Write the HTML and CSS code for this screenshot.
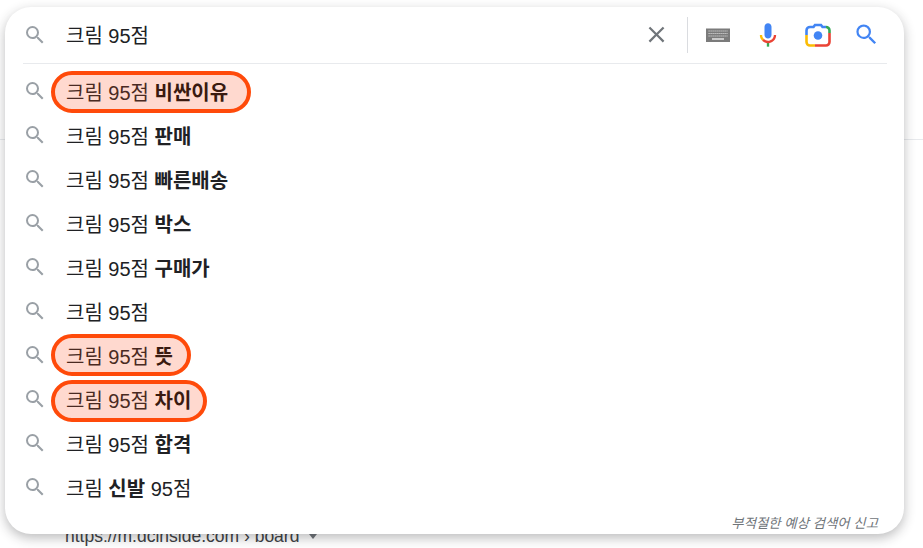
FILE: index.html
```html
<!DOCTYPE html>
<html lang="ko">
<head>
  <meta charset="UTF-8" />
  <title>크림 95점 - 검색</title>
  <link rel="stylesheet" href="styles.css">
</head>
<body>
  <svg class="defs" width="0" height="0">
    <symbol id="mag" viewBox="0 0 24 24">
      <path d="M15.5 14h-.79l-.28-.27A6.471 6.471 0 0 0 16 9.5 6.5 6.5 0 1 0 9.5 16c1.61 0 3.09-.59 4.23-1.57l.27.28v.79l5 4.99L20.49 19l-4.99-5zm-6 0C7.01 14 5 11.99 5 9.5S7.01 5 9.5 5 14 7.01 14 9.5 11.99 14 9.5 14z"/>
    </symbol>
  </svg>

  <!-- page behind the dropdown -->
  <div class="page">
    <div class="page-rule"></div>
    <div class="page-url">https://m.dcinside.com › board <span class="page-caret"></span></div>
  </div>

  <div class="searchbox">
    <div class="query">
      <svg class="mag"><use href="#mag"/></svg>
      <div class="query-text">크림 95점</div>
      <div class="tools">
        <svg class="tool-close" width="24" height="24" viewBox="0 0 24 24">
          <path d="M19 6.41 17.59 5 12 10.59 6.41 5 5 6.41 10.59 12 5 17.59 6.41 19 12 13.41 17.59 19 19 17.59 13.41 12z"/>
        </svg>
        <span class="tool-sep"></span>
        <svg class="tool-kbd" width="26" height="16" viewBox="0 0 26 16">
          <rect x="1" y="1.500" width="24" height="13.500" fill="#7b7b7b"/>
          <path d="M3.500 4h19M3.500 6.500h19M3.500 9h19" stroke="#d8d8d8" stroke-width="1.200" stroke-dasharray="1.200 .8" fill="none"/>
          <path d="M7 12h12" stroke="#e4e4e4" stroke-width="1.500"/>
        </svg>
        <svg class="tool-mic" width="28" height="28" viewBox="0 0 24 24">
          <path fill="#4285f4" d="m12 15c1.660 0 3-1.310 3-2.970v-7.020c0-1.660-1.340-3.010-3-3.010s-3 1.340-3 3.010v7.020c0 1.660 1.340 2.970 3 2.970z"/>
          <path fill="#34a853" d="m11 18.080h2v3.920h-2z"/>
          <path fill="#fbbc05" d="m7.050 16.870c-1.270-1.330-2.050-2.830-2.050-4.870h2c0 1.450 0.560 2.420 1.470 3.380v0.320l-1.150 1.180z"/>
          <path fill="#ea4335" d="m12 16.930a4.970 5.250 0 0 1 -3.540 -1.550l-1.410 1.490c1.260 1.340 3.020 2.130 4.950 2.130 3.870 0 6.990-2.920 6.990-6.990h-1.990c0 2.920-2.240 4.920-5 4.920z"/>
        </svg>
        <svg class="tool-lens" width="28" height="26" viewBox="0 0 28 26">
          <path d="M2.500 13V8.500a3.500 3.500 0 0 1 3.500-3.500h3.500l1.500-2h6l1.500 2H22" fill="none" stroke="#4285f4" stroke-width="2.600"/>
          <path d="M22 5a3.500 3.500 0 0 1 3.500 3.500V11" fill="none" stroke="#34a853" stroke-width="2.600"/>
          <path d="M25.500 11v9a3.500 3.500 0 0 1-3.500 3.500H11" fill="none" stroke="#ea4335" stroke-width="2.600"/>
          <path d="M11 23.500H6A3.500 3.500 0 0 1 2.500 20v-7" fill="none" stroke="#fbbc05" stroke-width="2.600"/>
          <circle cx="14" cy="13.500" r="4.300" fill="#4285f4"/>
        </svg>
        <svg class="tool-search" width="27" height="27" viewBox="0 0 24 24">
          <path d="M15.500 14h-.79l-.28-.27A6.471 6.471 0 0 0 16 9.500 6.500 6.500 0 1 0 9.500 16c1.610 0 3.090-.59 4.230-1.570l.27.28v.79l5 4.990L20.490 19l-4.990-5zm-6 0C7.010 14 5 11.990 5 9.500S7.010 5 9.500 5 14 7.010 14 9.500 11.990 14 9.500 14z"/>
        </svg>
      </div>
    </div>

    <ul class="suggestions">
      <li><svg class="mag"><use href="#mag"/></svg><span class="mark mark-a">크림 95점 <b>비싼이유</b></span></li>
      <li><svg class="mag"><use href="#mag"/></svg><span>크림 95점 <b>판매</b></span></li>
      <li><svg class="mag"><use href="#mag"/></svg><span>크림 95점 <b>빠른배송</b></span></li>
      <li><svg class="mag"><use href="#mag"/></svg><span>크림 95점 <b>박스</b></span></li>
      <li><svg class="mag"><use href="#mag"/></svg><span>크림 95점 <b>구매가</b></span></li>
      <li><svg class="mag"><use href="#mag"/></svg><span>크림 95점</span></li>
      <li><svg class="mag"><use href="#mag"/></svg><span class="mark mark-b">크림 95점 <b>뜻</b></span></li>
      <li><svg class="mag"><use href="#mag"/></svg><span class="mark mark-c">크림 95점 <b>차이</b></span></li>
      <li><svg class="mag"><use href="#mag"/></svg><span>크림 95점 <b>합격</b></span></li>
      <li><svg class="mag"><use href="#mag"/></svg><span>크림 <b>신발</b> 95점</span></li>
    </ul>

    <div class="report">부적절한 예상 검색어 신고</div>
  </div>
</body>
</html>
```

FILE: styles.css
```css
*,
*::before {
  box-sizing: border-box;
}
html,
body {
  height: 100%;
}
body {
  margin: 0;
  background: #fff;
  color: #202124;
  font-family: "Liberation Sans", "Noto Sans CJK KR", sans-serif;
  font-size: 20px;
  overflow: hidden;
}
.defs {
  position: absolute;
}

.page {
  height: 100%;
  padding-top: 139px;
}
.page-rule {
  height: 1px;
  background: #e8eaed;
}
.page-url {
  margin: 385px 0 0 65px;
  font-size: 17.5px;
  line-height: 22px;
  color: #3c4043;
}
.page-caret {
  display: inline-block;
  margin-left: 5px;
  vertical-align: 3px;
  border-top: 5px solid #70757a;
  border-left: 4px solid transparent;
  border-right: 4px solid transparent;
}

/* dropdown lies over the results page */
.searchbox {
  position: absolute;
  z-index: 0;
  left: 5px;
  top: 7px;
  width: 899px;
  height: 527px;
  background: #fff;
  border-radius: 26px;
  box-shadow: 0 4px 12px rgba(32, 33, 36, 0.3);
}

.mag {
  flex: none;
  width: 24px;
  height: 24px;
  margin-right: 19px;
  fill: #9aa0a6;
}

.query {
  display: flex;
  align-items: center;
  height: 57px;
  margin: 0 17px 0 18px;
  padding-bottom: 1px;
  border-bottom: 1px solid #e8eaed;
}
.query-text {
  flex: 1;
  margin-top: -1px;
}
.tools {
  display: flex;
  align-items: center;
}
.tools svg {
  flex: none;
}
.tool-close {
  fill: #70757a;
  width: 27px;
  height: 27px;
  margin-right: 17px;
}
.tool-sep {
  width: 1px;
  height: 36px;
  margin-right: 17px;
  background: #dadce0;
}
.tool-kbd {
  margin-right: 23px;
}
.tool-mic {
  margin-right: 22px;
}
.tool-lens {
  margin-right: 21px;
}
.tool-search {
  fill: #4285f4;
  margin-right: 7px;
}

.suggestions {
  list-style: none;
  margin: 0;
  padding: 6px 0 0 18px;
}
.suggestions li {
  display: flex;
  align-items: center;
  height: 44px;
}
.suggestions .mag {
  margin-top: -2px;
}
.suggestions span {
  margin-top: -1px;
}
.suggestions b {
  font-weight: 700;
}

/* hand drawn highlights, so each one sits a little differently */
.mark {
  position: relative;
  color: #4a2a22;
}
.mark b {
  color: #3a1a10;
}
.mark::before {
  content: "";
  position: absolute;
  z-index: -1;
  left: -15px;
  height: 42px;
  background: #ffd9cf;
  border: 4px solid #ff4a0a;
  border-radius: 21px;
}
.mark-a::before {
  top: -6px;
  right: -23px;
}
.mark-b::before {
  top: -7px;
  right: -18px;
}
.mark-c::before {
  top: -5px;
  right: -16px;
}

.report {
  margin: 4px 26px 0 0;
  text-align: right;
  font-size: 13.4px;
  line-height: 20px;
  font-style: italic;
  color: #70757a;
}
```
